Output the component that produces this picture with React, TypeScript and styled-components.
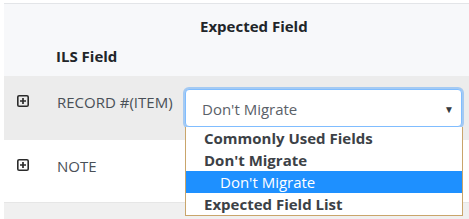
import React from "react";
import styled, {createGlobalStyle} from "styled-components";

const GlobalStyle = createGlobalStyle`
  html, body {
    margin: 0;
    padding: 0;
    background: #fff;
    font-family: "Open Sans", "Noto Sans", sans-serif;
    overflow: hidden;
  }
`;

const Page = styled.div`
  padding: 3px 0 0 4px;
  width: 469px;
  box-sizing: border-box;
`;

const Table = styled.div`
  border-top: 1px solid #e3e5e8;
  display: flex;
  flex-direction: column;
`;

const HeaderRow = styled.div`
  display: grid;
  grid-template-columns: 181px 1fr;
  height: 72px;
  background: #f7f8fa;
  color: #212529;
  font-weight: 700;
  font-size: 15px;
`;

const HeaderCell = styled.div<{ $bottom?: boolean; $pad: number }>`
  display: flex;
  align-items: ${p => (p.$bottom ? "flex-end" : "flex-start")};
  padding: ${p => (p.$bottom ? `0 0 10px ${p.$pad}px` : `12px 0 0 ${p.$pad}px`)};
`;

const Row = styled.div<{ $shade: string; $h: number; $line?: boolean }>`
  display: grid;
  grid-template-columns: 181px 1fr;
  height: ${p => p.$h}px;
  background: ${p => p.$shade};
  border-top: ${p => (p.$line ? "1px solid #e6e6e6" : "none")};
  position: relative;
`;

const NameCell = styled.div`
  display: flex;
  align-items: flex-start;
  padding: 16px 0 0 13px;
  gap: 28px;
  color: #495057;
  font-size: 15px;
`;

const Icon = styled.svg`
  flex: none;
  margin-top: 3px;
`;

const FieldCell = styled.div`
  padding: 13px 7px 0 0;
  position: relative;
`;

const Select = styled.div`
  height: 38px;
  box-sizing: border-box;
  border: 1px solid #80bdff;
  border-radius: 4px;
  box-shadow: 0 0 0 2px rgba(0, 123, 255, 0.3);
  background: #fff;
  display: flex;
  align-items: center;
  justify-content: space-between;
  padding: 2px 7px 0 16px;
  color: #5a6168;
  font-size: 15px;
`;

const Caret = styled.span`
  font-size: 10px;
  color: #343a40;
`;

const Menu = styled.div`
  position: absolute;
  top: 51px;
  left: 0;
  right: 6px;
  z-index: 5;
  background: #fff;
  border: 1px solid #c9a56b;
  border-top: none;
  display: flex;
  flex-direction: column;
`;

const Option = styled.div<{ $group?: boolean; $active?: boolean }>`
  height: 22px;
  line-height: 23px;
  font-size: 15px;
  white-space: nowrap;
  padding-left: ${p => (p.$group ? 18 : 34)}px;
  font-weight: ${p => (p.$group ? 700 : 400)};
  color: ${p => (p.$active ? "#fff" : "#3c4146")};
  background: ${p => (p.$active ? "#1e90ff" : "transparent")};
`;

const PlusBox = () => (
  <Icon width="12" height="12" viewBox="0 0 12 12">
    <rect x="0.8" y="0.8" width="10.4" height="10.4" rx="1.3" fill="none" stroke="#2b2b2b" strokeWidth="1.6"/>
    <path d="M6 3v6M3 6h6" stroke="#2b2b2b" strokeWidth="1.7"/>
  </Icon>
);

const App: React.FC = () => {
  return (
    <Page>
      <GlobalStyle/>
      <Table>
        <HeaderRow>
          <HeaderCell $bottom $pad={52}>ILS Field</HeaderCell>
          <HeaderCell $pad={15}>Expected Field</HeaderCell>
        </HeaderRow>
        <Row $shade="#ececec" $h={64}>
          <NameCell><PlusBox/>RECORD #(ITEM)</NameCell>
          <FieldCell>
            <Select>Don't Migrate<Caret>▼</Caret></Select>
            <Menu>
              <Option $group>Commonly Used Fields</Option>
              <Option $group>Don't Migrate</Option>
              <Option $active>Don't Migrate</Option>
              <Option $group>Expected Field List</Option>
            </Menu>
          </FieldCell>
        </Row>
        <Row $shade="#ffffff" $h={62}>
          <NameCell><PlusBox/>NOTE</NameCell>
          <FieldCell/>
        </Row>
        <Row $shade="#f0f0f0" $h={20} $line>
          <div/>
          <div/>
        </Row>
      </Table>
    </Page>
  );
};

export default App;
